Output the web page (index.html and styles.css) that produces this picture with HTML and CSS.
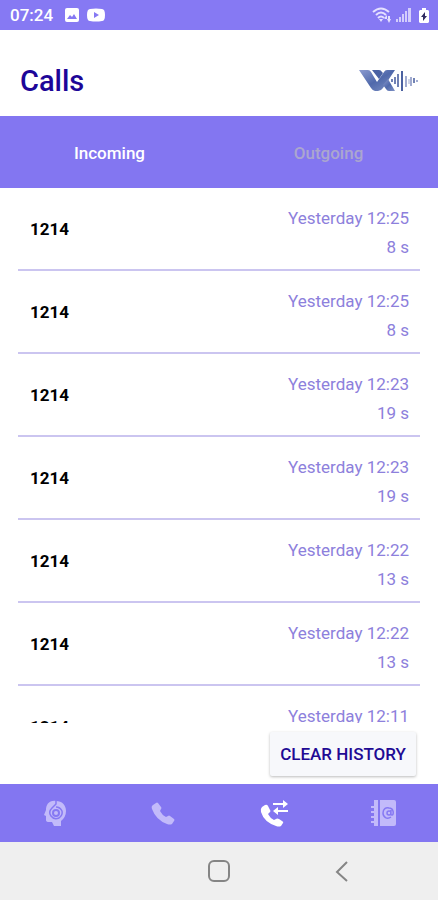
FILE: index.html
```html
<!DOCTYPE html>
<html lang="en">
<head>
<meta charset="utf-8">
<meta name="viewport" content="width=device-width, initial-scale=1">
<title>Calls</title>
<link rel="stylesheet" href="styles.css">
</head>
<body>
<div class="status">
  <span class="clock">07:24</span>
  <svg width="14" height="14" viewBox="0 0 14 14"><path fill="#fff" fill-rule="evenodd" d="M2 0h10a2 2 0 0 1 2 2v10a2 2 0 0 1-2 2H2a2 2 0 0 1-2-2V2a2 2 0 0 1 2-2zM2 11h10L9 6 7 9 5 7z"/></svg>
  <svg width="18" height="14" viewBox="0 0 18 14"><path fill="#fff" fill-rule="evenodd" d="M3 1Q9 0 15 1q3 0 3 6t-3 6q-6 1-12 0-3 0-3-6t3-6zM7 4v6l5-3z"/></svg>
  <span class="spacer"></span>
  <svg width="20" height="16" viewBox="0 0 20 16"><g fill="none" stroke="#e4e0ff" stroke-width="2"><path d="M1 5q8-7 16 0M4 8q5-5 10 0M6 11q3-3 6 0"/></g><path fill="#e4e0ff" d="M7 12h4l-2 3zM13 12h2V8l-3 3zM16 9h2v3h1l-2 4-2-4h1z"/></svg>
  <svg width="15" height="14" viewBox="0 0 15 14"><path fill="#d3cdfc" d="M0 11h2v3H0zM3 9h2v5H3zM6 6h2v8H6zM9 3h2v11H9zM12 0h3v14h-3z"/></svg>
  <svg class="battery" width="10" height="15" viewBox="0 0 10 15"><path fill="#fff" d="M3 0h4v2h2l1 1v11l-1 1H1l-1-1V3l1-1h2z"/><path fill="#302c60" d="M6 4 2 9h2v4l4-5H6z"/></svg>
</div>
<header class="header">
  <h1>Calls</h1>
  <svg width="60" height="24" viewBox="0 0 60 24" role="img" aria-label="VX">
    <defs><linearGradient id="g" x1="0" y1="0" x2="1" y2="1"><stop offset="0" stop-color="#8c9bd0"/><stop offset=".5" stop-color="#5069ab"/><stop offset="1" stop-color="#7f92c5"/></linearGradient></defs>
    <path fill="url(#g)" d="M1 1h9q2 0 3 2l6 10 7-10q1-2 3-2h8L25 19q-2 3-5 3h-3q-2 0-4-3z"/>
    <path fill="#4a62a4" d="M14 1h7q2 0 3 2l1 1-4 6z"/>
    <path fill="url(#g)" d="m25 16 5-6 7 12h-6q-2 0-3-2z"/>
    <g stroke="#7182b4" stroke-width="2"><path d="M34 10v3M37 8v7M40 5v13"/><path stroke="#4c62a1" d="M44 2v20"/><path stroke="#a2acd0" d="M48 7v11M53 8v9"/><path stroke="#a2acd0" stroke-width="1" d="M51 10v5"/><path d="M56 9v5"/><path stroke="#a2acd0" d="M59 11v2"/></g>
  </svg>
</header>
<div class="tabs" role="tablist">
  <button class="tab active" role="tab" aria-selected="true">Incoming</button>
  <button class="tab" role="tab" aria-selected="false">Outgoing</button>
</div>
<main class="main">
  <ul class="calls">
    <li class="call"><strong>1214</strong><div class="meta"><span>Yesterday 12:25</span><span>8 s</span></div></li>
    <li class="call"><strong>1214</strong><div class="meta"><span>Yesterday 12:25</span><span>8 s</span></div></li>
    <li class="call"><strong>1214</strong><div class="meta"><span>Yesterday 12:23</span><span>19 s</span></div></li>
    <li class="call"><strong>1214</strong><div class="meta"><span>Yesterday 12:23</span><span>19 s</span></div></li>
    <li class="call"><strong>1214</strong><div class="meta"><span>Yesterday 12:22</span><span>13 s</span></div></li>
    <li class="call"><strong>1214</strong><div class="meta"><span>Yesterday 12:22</span><span>13 s</span></div></li>
    <li class="call"><strong>1214</strong><div class="meta"><span>Yesterday 12:11</span></div></li>
  </ul>
  <div class="actions"><button class="clear">CLEAR HISTORY</button></div>
</main>
<nav class="nav">
  <a href="#assistant" aria-label="Assistant"><svg width="28" height="28" viewBox="0 0 28 28"><path fill="currentColor" d="M15 2C8 1 5 6 5 11l-2 5 2 1v4q0 2 3 2h3l2 4h7v-5q5-4 5-10C25 6 21 2 15 2z"/><path fill="none" stroke="#8679f3" stroke-width="1.5" d="M15 1v4l-4 4q-4 4-1 8 3 4 8 2 4-3 3-7-2-4-6-4"/><circle cx="15" cy="14" r="3" fill="none" stroke="#8679f3" stroke-width="2"/></svg></a>
  <a href="#phone" aria-label="Phone"><svg width="28" height="28" viewBox="0 0 28 28"><path fill="currentColor" d="m3 6 3-2q1-1 2 0l3 4q1 1 0 2l-1 2q2 4 6 6l2-1q1-1 2 0l4 3q1 1 0 2l-2 3q-2 1-5 0Q6 21 2 10q-1-3 1-4z"/></svg></a>
  <a class="current" href="#calls" aria-label="Calls" aria-current="page"><svg width="28" height="28" viewBox="0 0 28 28"><path fill="currentColor" d="m2 8 3-2q2-1 3 1l2 4q1 1 0 2l-2 2q2 4 6 6l2-1q1-1 3 0l3 2q2 1 1 2l-2 3q-2 1-5 0Q4 23 1 13q-1-3 1-5zM13 4h10V1l5 4-5 4V6H13zM28 11v2H18v3l-5-4 5-4v3z"/></svg></a>
  <a href="#contacts" aria-label="Contacts"><svg width="28" height="28" viewBox="0 0 28 28"><path fill="currentColor" d="M5 1h4v26H5v-3H2v-2h3v-3H2v-2h3v-3H2v-2h3V9H2V7h3zM11 1h14q2 0 2 2v22q0 2-2 2H11z"/><path fill="none" stroke="#8679f3" stroke-width="1.5" d="M22 18c-4 3-8 0-8-4s3-6 6-5c5 0 5 7 3 7s-1-2-1-5m0 3a2 2 0 1 1-4 0 2 2 0 0 1 4 0"/></svg></a>
</nav>
<div class="system">
  <button class="home" aria-label="Home"><svg width="24" height="24" viewBox="0 0 24 24"><rect x="2" y="2" width="20" height="20" rx="5"/></svg></button>
  <button aria-label="Back"><svg width="24" height="24" viewBox="0 0 24 24"><path d="M17 3 7 13l10 9"/></svg></button>
</div>
</body>
</html>
```
FILE: styles.css
```css
* { box-sizing: border-box; }

body {
  margin: 0;
  height: 100vh;
  display: flex;
  flex-direction: column;
  background: #fff;
  font-family: Roboto, sans-serif;
  font-size: 17px;
}

button {
  border: 0;
  padding: 0;
  background: none;
  font: inherit;
}

svg { display: block; }

.status {
  display: flex;
  align-items: center;
  gap: 8px;
  flex: none;
  height: 30px;
  padding: 0 9px 0 10px;
  background: #8679f3;
}

.clock {
  margin-right: 4px;
  color: #fff;
  font-weight: 500;
}

.spacer { flex: 1; }
.spacer ~ svg + svg { margin-left: -4px; }
.status .battery { margin-left: 0; }

.header {
  display: flex;
  align-items: center;
  justify-content: space-between;
  flex: none;
  padding: 34px 20px 18px;
}

h1 {
  margin: 0;
  color: #1d0698;
  font-size: 29px;
  font-weight: 500;
  line-height: 34px;
}

.tabs {
  display: grid;
  grid-template-columns: 1fr 1fr;
  flex: none;
  height: 72px;
  background: #8376f1;
}

.tab {
  padding-top: 2px;
  color: #aba6cf;
  font-size: 17px;
  font-weight: 500;
}

.tab.active { color: #fff; }

.main {
  display: flex;
  flex-direction: column;
  flex: 1;
  min-height: 0;
}

.calls {
  flex: 1;
  min-height: 0;
  margin: 0;
  padding: 0 18px;
  overflow-y: auto;
  scrollbar-width: none;
  list-style: none;
}

.call {
  display: flex;
  align-items: center;
  justify-content: space-between;
  height: 83px;
  padding: 0 11px 0 12px;
  border-bottom: 2px solid #cbc5f0;
}

.call strong { font-weight: 700; }

.meta {
  display: flex;
  flex-direction: column;
  align-self: flex-start;
  padding-top: 16px;
  color: #8d80dc;
  line-height: 29px;
  text-align: right;
}

.actions {
  display: flex;
  justify-content: flex-end;
  flex: none;
  padding: 9px 22px 8px;
}

.clear {
  height: 44px;
  padding: 0 10px;
  border-radius: 2px;
  background: #f7f8fb;
  box-shadow: 0 1px 3px #0004;
  color: #210a94;
  font-weight: 500;
}

.nav {
  display: grid;
  grid-template-columns: repeat(4, 1fr);
  flex: none;
  height: 58px;
  background: #8376f1;
}

.nav a {
  display: grid;
  place-items: center;
  color: #c2bafa;
}

.nav .current { color: #fff; }

.system {
  display: grid;
  grid-template-columns: repeat(3, 1fr);
  flex: none;
  height: 58px;
  padding: 0 8%;
  background: #efefef;
}

.system button {
  display: grid;
  place-items: center;
}

.system .home { grid-column: 2; }

.system svg {
  fill: none;
  stroke: #858585;
  stroke-width: 2;
}
```
